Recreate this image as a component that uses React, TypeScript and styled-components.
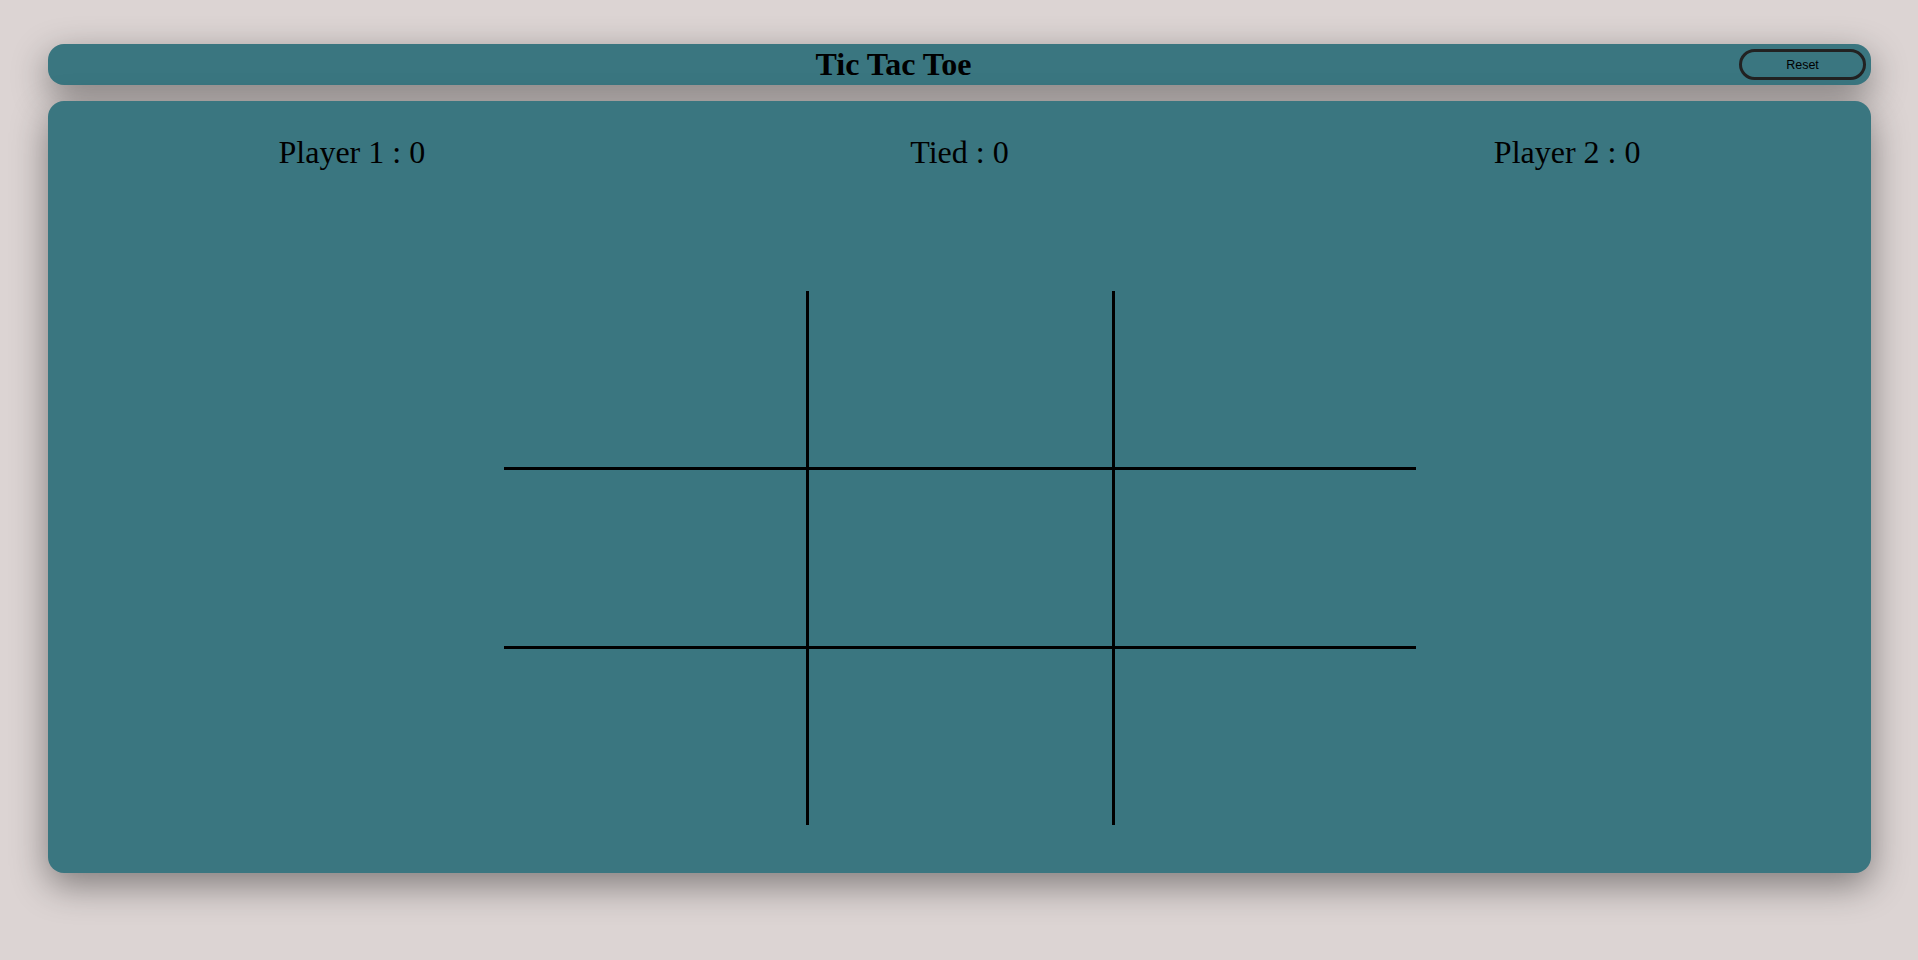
import React from "react";
import styled, { createGlobalStyle } from "styled-components";

const GlobalStyle = createGlobalStyle`
  html, body {
    margin: 0;
    padding: 0;
    background: #dcd4d3;
    font-family: "Liberation Serif", "Times New Roman", serif;
    color: #000;
  }
  #root {
    padding-top: 44px;
    min-height: 100vh;
    box-sizing: border-box;
  }
`;

const Page = styled.div`
  margin: 0 47px 0 48px;
  display: flex;
  flex-direction: column;
  gap: 16px;
`;

const Header = styled.header`
  height: 41px;
  box-sizing: border-box;
  padding: 0 5px 0 0;
  display: flex;
  align-items: center;
  background: #3a7680;
  border-radius: 16px;
  box-shadow: 0 12px 36px rgba(0, 0, 0, 0.42);
`;

const Title = styled.h1`
  flex: 1;
  margin: -2px 0 0;
  text-align: center;
  font-size: 32px;
  line-height: 36px;
  font-weight: bold;
  font-family: "Liberation Serif", "Times New Roman", serif;
`;

const ResetButton = styled.button`
  width: 127px;
  height: 31px;
  box-sizing: border-box;
  border: 3px solid #222;
  border-radius: 16px;
  background: transparent;
  color: #000;
  font-family: "Liberation Sans", Arial, sans-serif;
  font-size: 12.5px;
  cursor: pointer;
  padding: 1px 0 0;
`;

const Board = styled.main`
  height: 772px;
  box-sizing: border-box;
  padding: 33px 0 48px;
  background: #3a7680;
  border-radius: 16px;
  box-shadow: 0 12px 36px rgba(0, 0, 0, 0.42);
  display: flex;
  flex-direction: column;
  align-items: center;
`;

const Scores = styled.div`
  width: 100%;
  display: grid;
  grid-template-columns: repeat(3, 1fr);
`;

const Score = styled.div`
  text-align: center;
  font-size: 32px;
  line-height: 36px;
`;

const Grid = styled.div`
  width: 912px;
  margin-top: 121px;
  display: grid;
  grid-template-columns: 305fr 306fr 301fr;
`;

const Cell = styled.div<{ $right: boolean; $bottom: boolean }>`
  height: 176px;
  border-right: ${(p) => (p.$right ? "3px solid #000" : "none")};
  border-bottom: ${(p) => (p.$bottom ? "3px solid #000" : "none")};
  cursor: pointer;
`;

export default function App() {
  const cells = Array.from({ length: 9 }, (_, i) => i);
  return (
    <>
      <GlobalStyle />
      <Page>
        <Header>
          <Title>Tic Tac Toe</Title>
          <ResetButton>Reset</ResetButton>
        </Header>
        <Board>
          <Scores>
            <Score>Player 1 : 0</Score>
            <Score>Tied : 0</Score>
            <Score>Player 2 : 0</Score>
          </Scores>
          <Grid>
            {cells.map((i) => (
              <Cell key={i} $right={i % 3 !== 2} $bottom={i < 6} />
            ))}
          </Grid>
        </Board>
      </Page>
    </>
  );
}
